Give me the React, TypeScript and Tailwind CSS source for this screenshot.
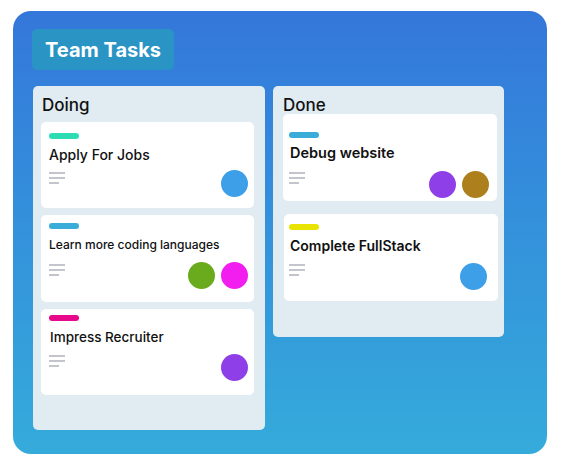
import React from 'react';

type Task = {
  title: string;
  label: string;
  avatars: string[];
  box: string;
  pad: string;
  titleCls: string;
  rowCls: string;
  linesCls: string;
};

const doing: Task[] = [
  {
    title: 'Apply For Jobs',
    label: 'bg-[#2edcb4]',
    avatars: ['bg-[#3d9fe8]'],
    box: 'h-[86px]',
    pad: 'pt-[11px] pl-[8px] pr-[6px]',
    titleCls: 'mt-[6px] text-[14px] font-medium',
    rowCls: 'mt-[5px]',
    linesCls: 'mt-[2px]',
  },
  {
    title: 'Learn more coding languages',
    label: 'bg-[#3aacda]',
    avatars: ['bg-[#6aab1e]', 'bg-[#f21ef0]'],
    box: 'h-[87px]',
    pad: 'pt-[8px] pl-[8px] pr-[6px]',
    titleCls: 'mt-[6px] text-[12px] font-medium',
    rowCls: 'mt-[7px]',
    linesCls: 'mt-[2px]',
  },
  {
    title: 'Impress Recruiter',
    label: 'bg-[#e8088a]',
    avatars: ['bg-[#8e3fe8]'],
    box: 'h-[86px]',
    pad: 'pt-[6px] pl-[8px] pr-[6px]',
    titleCls: 'mt-[6px] pl-px text-[13.5px] font-medium',
    rowCls: 'mt-[7px]',
    linesCls: 'mt-px',
  },
];

const done: Task[] = [
  {
    title: 'Debug website',
    label: 'bg-[#3aacda]',
    avatars: ['bg-[#8e3fe8]', 'bg-[#ad801d]'],
    box: 'h-[87px] ml-[10px] mr-[7px]',
    pad: 'pt-[18px] pl-[6px] pr-[8px]',
    titleCls: 'mt-[5px] pl-px text-[14.5px] font-semibold',
    rowCls: 'mt-[8px]',
    linesCls: 'mt-px',
  },
  {
    title: 'Complete FullStack',
    label: 'bg-[#e8e400]',
    avatars: ['bg-[#3d9fe8]'],
    box: 'h-[87px] ml-[11px] mr-[6px]',
    pad: 'pt-[10px] pl-[5px] pr-[11px]',
    titleCls: 'mt-[6px] pl-px text-[14px] font-semibold',
    rowCls: 'mt-[7px]',
    linesCls: 'mt-px',
  },
];

function Lines({ className }: { className: string }) {
  return (
    <div className={'flex flex-col gap-[3px] ' + className}>
      <span className="block h-[2px] w-[16px] bg-[#c4c4cc]" />
      <span className="block h-[2px] w-[16px] bg-[#c4c4cc]" />
      <span className="block h-[2px] w-[10px] bg-[#c4c4cc]" />
    </div>
  );
}

function Card({ task }: { task: Task }) {
  return (
    <div className={'rounded-[5px] bg-white ' + task.box + ' ' + task.pad}>
      <div className={'h-[6px] w-[30px] rounded-full ' + task.label} />
      <div className={'leading-[20px] text-[#111] ' + task.titleCls}>{task.title}</div>
      <div className={'flex items-start justify-between ' + task.rowCls}>
        <Lines className={task.linesCls} />
        <div className="flex gap-[6px]">
          {task.avatars.map((c, i) => (
            <span key={i} className={'block h-[27px] w-[27px] rounded-full ' + c} />
          ))}
        </div>
      </div>
    </div>
  );
}

export default function App() {
  return (
    <div className="h-[471px] w-[569px] bg-white pl-[13px] pt-[11px] font-['Inter','Liberation_Sans',sans-serif]">
      <div className="h-[443px] w-[534px] rounded-[18px] bg-gradient-to-b from-[#3477da] to-[#35abdb] px-[19px] pt-[18px]">
        <div className="flex h-[41px] w-[142px] items-center rounded-[5px] bg-[#2a94c4] pl-[13px] text-[20px] font-bold text-white">
          Team Tasks
        </div>

        <div className="mt-[16px] flex items-start gap-[8px] pl-px">
          {/* Doing */}
          <div className="h-[344px] w-[232px] rounded-[5px] bg-[#e1ebf2] pl-[8px] pr-[11px]">
            <h2 className="pl-px pt-[8px] text-[17px] font-medium leading-[22px] text-[#111]">Doing</h2>
            <div className="mt-[6px] flex flex-col gap-[7px]">
              {doing.map((t) => (
                <Card key={t.title} task={t} />
              ))}
            </div>
          </div>

          {/* Done */}
          <div className="h-[251px] w-[231px] rounded-[5px] bg-[#e1ebf2]">
            <h2 className="pl-[10px] pt-[8px] text-[17px] font-medium leading-[22px] text-[#111]">Done</h2>
            <div className="-mt-[2px] flex flex-col gap-[13px]">
              {done.map((t) => (
                <Card key={t.title} task={t} />
              ))}
            </div>
          </div>
        </div>
      </div>
    </div>
  );
}
